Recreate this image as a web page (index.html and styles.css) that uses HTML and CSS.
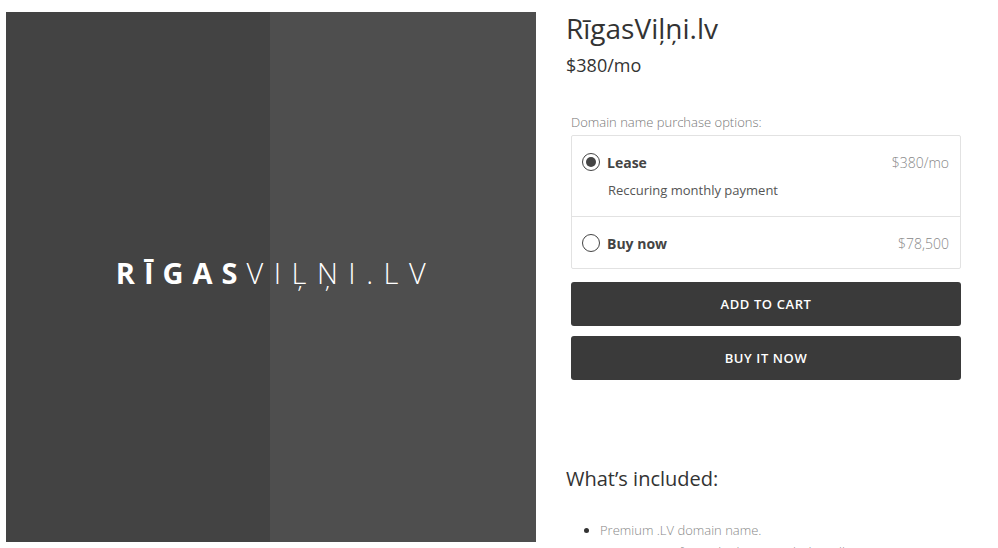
FILE: index.html
```html
<!DOCTYPE html>
<html lang="lv">
<head>
<meta charset="utf-8">
<link rel="stylesheet" href="styles.css">
</head>
<body>
<div class="page">
  <div class="media">
    <div class="half dark"></div>
    <div class="half light"></div>
    <div class="logo"><span class="bold">RĪGAS</span><span class="thin">VIĻŅI.LV</span></div>
  </div>
  <div class="info">
    <h1 class="title">RīgasViļņi.lv</h1>
    <div class="price">$380/mo</div>
    <div class="form">
      <div class="label">Domain name purchase options:</div>
      <div class="options">
        <div class="option first">
          <div class="opt-head">
            <span class="radio checked"></span>
            <span class="opt-name">Lease</span>
            <span class="opt-price">$380/mo</span>
          </div>
          <div class="opt-desc">Reccuring monthly payment</div>
        </div>
        <div class="option">
          <div class="opt-head">
            <span class="radio"></span>
            <span class="opt-name">Buy now</span>
            <span class="opt-price">$78,500</span>
          </div>
        </div>
      </div>
      <button class="btn">ADD TO CART</button>
      <button class="btn">BUY IT NOW</button>
    </div>
    <h2 class="inc">What’s included:</h2>
    <ul class="list">
      <li>Premium .LV domain name.</li>
      <li>Domain transfer to the buyer, including all necessary assistance.</li>
    </ul>
  </div>
</div>
</body>
</html>
```
FILE: styles.css
```css
html, body { margin: 0; padding: 0; background: #fff; overflow: hidden; }
body { font-family: "Open Sans", "Noto Sans", sans-serif; color: #333; }
.page { display: flex; padding: 12px 0 0 6px; height: 548px; box-sizing: border-box; overflow: hidden; }
.media { position: relative; width: 530px; height: 530px; flex: none; display: flex; }
.half { height: 100%; }
.dark { width: 264px; background: #434343; }
.light { flex: 1; background: #4e4e4e; }
.logo { position: absolute; left: 0; right: 0; top: 241px; text-align: center; color: #fff; font-family: "Open Sans", sans-serif; font-size: 29px; white-space: nowrap; padding-left: 10px; }
.logo .bold { font-weight: 700; letter-spacing: 9px; }
.logo .thin { font-weight: 300; letter-spacing: 10.5px; }
.info { margin-left: 30px; width: 395px; }
.title { margin: 0; font-weight: 400; font-size: 28px; line-height: 32px; color: #333; font-family: "Open Sans", sans-serif; }
.price { margin-top: 9px; font-size: 18px; line-height: 24px; color: #333; font-weight: 400; }
.form { margin-top: 36px; padding-left: 5px; }
.label { font-size: 13px; color: #777; font-weight: 300; line-height: 18px; }
.options { margin-top: 4px; border: 1px solid #e2e2e2; border-radius: 2px; }
.option { padding: 16px 11px 15px 10px; }
.option.first { border-bottom: 1px solid #e2e2e2; padding-bottom: 17px; }
.opt-head { display: flex; align-items: center; height: 20px; }
.radio { width: 18px; height: 18px; border: 1.5px solid #444; border-radius: 50%; box-sizing: border-box; position: relative; flex: none; }
.radio.checked::after { content: ""; position: absolute; left: 2.5px; top: 2.5px; width: 10px; height: 10px; border-radius: 50%; background: #444; }
.opt-name { margin-left: 7px; font-weight: 700; font-size: 14px; color: #444; }
.opt-price { margin-left: auto; font-size: 14px; color: #888; font-weight: 300; }
.opt-desc { margin: 9px 0 0 26px; font-size: 13px; color: #555; line-height: 18px; }
.btn { display: block; width: 390px; height: 44px; border: 0; border-radius: 3px; background: #3a3a3a; color: #fff; font-family: "Open Sans", sans-serif; font-size: 13px; font-weight: 600; letter-spacing: 0.6px; margin-top: 13px; cursor: pointer; padding: 0; }
.btn + .btn { margin-top: 10px; }
.inc { margin: 86px 0 0; font-size: 20px; font-weight: 400; line-height: 26px; color: #333; }
.list { margin: 27px 0 0; padding-left: 34px; font-size: 13px; color: #888; font-weight: 300; line-height: 22px; }
.list li::marker { color: #333; }
```
